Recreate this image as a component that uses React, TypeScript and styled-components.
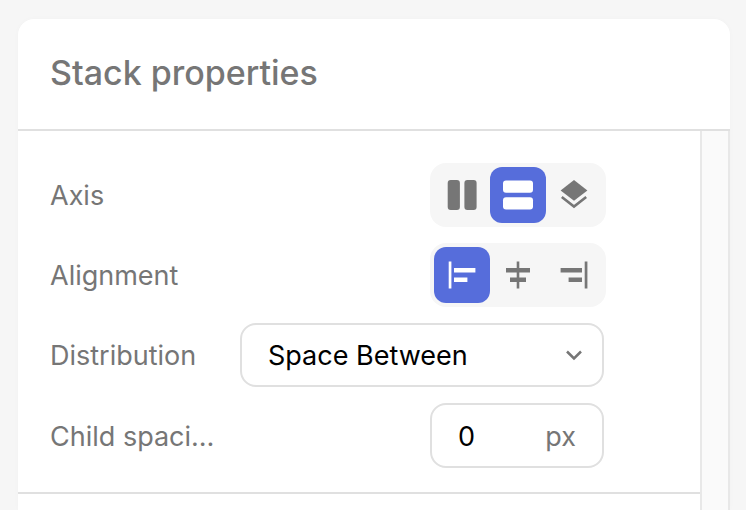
import React, { useState } from "react";
import styled, { createGlobalStyle } from "styled-components";

const GlobalStyle = createGlobalStyle`
  *, *::before, *::after { box-sizing: border-box; }
  html, body, #root { height: 100%; }
  body {
    margin: 0;
    overflow: hidden;
    background: #f6f6f6;
    color: #767676;
    font-family: Inter, "Liberation Sans", sans-serif;
    font-size: 27px;
    line-height: 32px;
    font-optical-sizing: none;
  }
  button, input, select { font: inherit; margin: 0; }
`;

const Page = styled.main`
  display: flex;
  height: 100%;
  padding: 19px 16px 0 18px;
`;

const Panel = styled.section`
  display: flex;
  flex: 1;
  flex-direction: column;
  min-width: 0;
  overflow: hidden;
  background: #fff;
  border-radius: 16px 16px 0 0;
  box-shadow: 0 0 6px rgba(0, 0, 0, 0.02);
`;

const Header = styled.header`
  padding: 34px 32px 36px;
  border-bottom: 2px solid #e0e0e0;
`;

const Title = styled.h2`
  margin: 0;
  font-size: 34px;
  font-weight: 500;
  line-height: 40px;
`;

const Body = styled.div`
  display: flex;
  flex: 1;
  min-height: 0;
`;

const Content = styled.div`
  flex: 1;
  min-width: 0;
`;

const ScrollTrack = styled.div`
  width: 30px;
  background: #fafafa;
  border: solid #e8e8e8;
  border-width: 0 2px;
`;

const Properties = styled.div`
  display: flex;
  flex-direction: column;
  gap: 16px;
  padding: 32px 94px 24px 32px;
  border-bottom: 2px solid #e0e0e0;
`;

const Row = styled.div`
  display: grid;
  grid-template-columns: 166px minmax(0, 1fr);
  column-gap: 24px;
  align-items: center;
`;

const Label = styled.label`
  padding-top: 2px;
  overflow: hidden;
  text-overflow: ellipsis;
  white-space: nowrap;
`;

const Segments = styled.div`
  display: flex;
  justify-self: end;
  padding: 4px;
  background: #f6f6f6;
  border-radius: 16px;
`;

const Segment = styled.button<{ $active: boolean }>`
  display: flex;
  width: 56px;
  height: 56px;
  padding: 0;
  border: 0;
  border-radius: 12px;
  background: ${(p) => (p.$active ? "#566ddb" : "transparent")};
  color: ${(p) => (p.$active ? "#fff" : "#767676")};
  cursor: pointer;
`;

const Icon = styled.svg`
  width: 56px;
  height: 56px;
  fill: currentColor;
`;

const SelectField = styled.div`
  position: relative;
  margin-right: 2px;
`;

const Select = styled.select`
  display: block;
  width: 100%;
  height: 64px;
  padding: 2px 56px 0 26px;
  appearance: none;
  color: #000;
  background: #fff;
  border: 2px solid #e0e0e0;
  border-radius: 16px;
`;

const Chevron = styled.svg`
  position: absolute;
  top: 24px;
  right: 22px;
  width: 16px;
  height: 16px;
  fill: none;
  stroke: #767676;
  stroke-width: 2.5;
  pointer-events: none;
`;

const NumberField = styled.div`
  display: flex;
  align-items: center;
  justify-self: end;
  width: 174px;
  height: 65px;
  margin-right: 2px;
  padding: 2px 26px 0;
  color: #000;
  border: 2px solid #e0e0e0;
  border-radius: 16px;
`;

const NumberInput = styled.input`
  flex: 1;
  width: 0;
  min-width: 0;
  padding: 0;
  border: 0;
  outline: 0;
  color: inherit;
  background: transparent;
`;

const Unit = styled.span`
  color: #767676;
`;

const axes = [
  {
    name: "Horizontal",
    art: (
      <>
        <rect x="13.7" y="13" width="12.2" height="30" rx="3" />
        <rect x="30.4" y="13" width="12.2" height="30" rx="3" />
      </>
    ),
  },
  {
    name: "Vertical",
    art: (
      <>
        <rect x="13" y="13.6" width="30" height="12.2" rx="3" />
        <rect x="13" y="30.2" width="30" height="12.2" rx="3" />
      </>
    ),
  },
  {
    name: "Layered",
    art: (
      <>
        <path d="M28 13 41.4 23.4 28 33.8 14.6 23.4Z" />
        <path d="M15.8 30 28 39.5 40.2 30" fill="none" stroke="currentColor" strokeWidth="2.6" />
      </>
    ),
  },
];

const alignments = [
  { name: "Start", art: <path d="M14.7 14.6h2.7v26.8h-2.7zM20 21h21.4v4.6H20zM20 30.6h13.4v4.4H20z" /> },
  { name: "Center", art: <path d="M26.7 14.6h2.6v26.8h-2.6zM16 21h24v4.6H16zM20 30.6h16v4.4H20z" /> },
  { name: "End", art: <path d="M38.7 14.6h2.7v26.8h-2.7zM14.6 21H36v4.6H14.6zM22.6 30.6H36v4.4H22.6z" /> },
];

type Option = { name: string; art: React.ReactNode };

function SegmentedControl({ labelId, options, initial }: { labelId: string; options: Option[]; initial: string }) {
  const [value, setValue] = useState(initial);
  return (
    <Segments role="group" aria-labelledby={labelId}>
      {options.map((o) => (
        <Segment
          key={o.name}
          type="button"
          aria-label={o.name}
          aria-pressed={value === o.name}
          $active={value === o.name}
          onClick={() => setValue(o.name)}
        >
          <Icon viewBox="0 0 56 56" aria-hidden="true">{o.art}</Icon>
        </Segment>
      ))}
    </Segments>
  );
}

export default function App() {
  return (
    <>
      <GlobalStyle />
      <Page>
        <Panel>
          <Header>
            <Title>Stack properties</Title>
          </Header>
          <Body>
            <Content>
              <Properties>
                <Row>
                  <Label as="span" id="axis">Axis</Label>
                  <SegmentedControl labelId="axis" options={axes} initial="Vertical" />
                </Row>
                <Row>
                  <Label as="span" id="alignment">Alignment</Label>
                  <SegmentedControl labelId="alignment" options={alignments} initial="Start" />
                </Row>
                <Row>
                  <Label htmlFor="distribution">Distribution</Label>
                  <SelectField>
                    <Select id="distribution" defaultValue="Space Between">
                      <option>Space Between</option>
                    </Select>
                    <Chevron viewBox="0 0 16 16" aria-hidden="true">
                      <path d="m1 4.5 7 7 7-7" />
                    </Chevron>
                  </SelectField>
                </Row>
                <Row>
                  <Label htmlFor="spacing">Child spacing</Label>
                  <NumberField>
                    <NumberInput id="spacing" inputMode="numeric" defaultValue="0" />
                    <Unit>px</Unit>
                  </NumberField>
                </Row>
              </Properties>
            </Content>
            <ScrollTrack />
          </Body>
        </Panel>
      </Page>
    </>
  );
}
